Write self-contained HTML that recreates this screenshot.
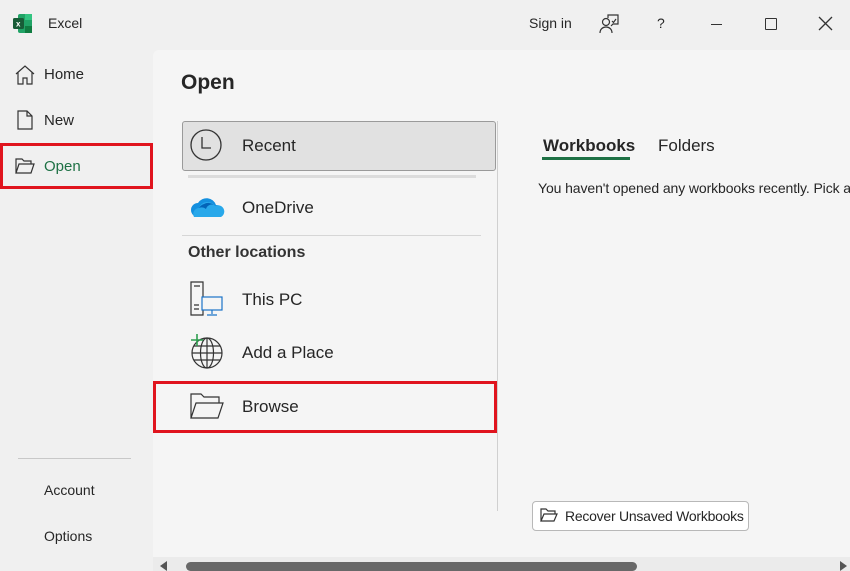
<!DOCTYPE html>
<html><head><style>
*{margin:0;padding:0;box-sizing:border-box}
body{width:850px;height:571px;overflow:hidden;background:#f0f0f0;font-family:"Segoe UI","Liberation Sans",sans-serif;color:#262626;position:relative}
.a{position:absolute}
.t{font-size:15px;white-space:nowrap}
svg{position:absolute;overflow:visible}
</style></head><body>
<svg style="left:13px;top:14px" width="20" height="20" viewBox="0 0 20 20">
<rect x="5" y="0" width="14" height="19" rx="2" fill="#21a366"/>
<rect x="12" y="0" width="7" height="6" fill="#33c481"/>
<rect x="12" y="12" width="7" height="7" fill="#107c41"/>
<rect x="0" y="4" width="11" height="11" rx="1.5" fill="#185c37"/>
<text x="3" y="12.5" font-size="8" font-weight="bold" fill="#fff" font-family="Liberation Sans">x</text>
</svg>
<div class="a t" style="left:48px;top:15px;font-size:14px">Excel</div>
<div class="a t" style="left:529px;top:15px;font-size:14px">Sign in</div>
<svg style="left:599px;top:14px" width="20" height="20" viewBox="0 0 20 20" fill="none" stroke="#333" stroke-width="1.2">
<circle cx="7" cy="8" r="3.5"/><path d="M1 19c0-4 3-6 6-6s6 2 6 6"/><path d="M9 4V1h10v9h-5l-2 2"/><path d="M13 7l1.5 1.5L17 5"/>
</svg>
<div class="a t" style="left:657px;top:15px;font-size:14px">?</div>
<div class="a" style="left:711px;top:24px;width:11px;height:1.3px;background:#333"></div>
<div class="a" style="left:765px;top:18px;width:12px;height:12px;border:1.3px solid #333;border-radius:1px"></div>
<svg style="left:819px;top:17px" width="13" height="13" viewBox="0 0 13 13" stroke="#333" stroke-width="1.3"><path d="M0 0L13 13M13 0L0 13"/></svg>

<svg style="left:15px;top:65px" width="20" height="20" viewBox="0 0 20 20" fill="none" stroke="#333" stroke-width="1.2"><path d="M1 9L10 1l9 8M3 7v12h5v-6h4v6h5V7"/></svg>
<div class="a t" style="left:44px;top:66px">Home</div>
<svg style="left:17px;top:110px" width="16" height="20" viewBox="0 0 16 20" fill="none" stroke="#333" stroke-width="1.2"><path d="M1 1h9l5 5v13H1zM10 1v5h5"/></svg>
<div class="a t" style="left:44px;top:112px">New</div>
<div class="a" style="left:0;top:143px;width:153px;height:46px;border:3px solid #e0141e"></div>
<svg style="left:15px;top:158px" width="20" height="16" viewBox="0 0 20 16" fill="none" stroke="#333" stroke-width="1.2"><path d="M1 15V1h6l2 2h7v3M1 15l3-9h15l-3 9z"/></svg>
<div class="a t" style="left:44px;top:158px;color:#1e7145">Open</div>
<div class="a" style="left:18px;top:458px;width:113px;height:1px;background:#c8c8c8"></div>
<div class="a t" style="left:44px;top:482px;font-size:14px">Account</div>
<div class="a t" style="left:44px;top:528px;font-size:14px">Options</div>

<div class="a" style="left:153px;top:50px;width:697px;height:521px;background:#f5f5f5;border-top-left-radius:6px"></div>
<div class="a" style="left:181px;top:71px;font-size:21px;font-weight:600;color:#262626">Open</div>

<div class="a" style="left:182px;top:121px;width:314px;height:50px;background:#e1e1e1;border:1px solid #9a9a9a;border-radius:3px"></div>
<svg style="left:190px;top:129px" width="32" height="32" viewBox="0 0 32 32" fill="none" stroke="#333" stroke-width="1.3"><circle cx="16" cy="16" r="15"/><path d="M12 8v11h9"/></svg>
<div class="a t" style="left:242px;top:136px;font-size:17px">Recent</div>
<div class="a" style="left:188px;top:175px;width:288px;height:3px;background:#dcdcdc"></div>

<svg style="left:190px;top:197px" width="34" height="22" viewBox="0 0 34 22">
<path d="M8 20a7 7 0 0 1 0-14 10 10 0 0 1 18 2 6 6 0 0 1 1 12z" fill="#1490df"/>
<path d="M4 20a6 6 0 0 1 5-9 9 9 0 0 1 16-2 5.5 5.5 0 0 1 6 11z" fill="#28a8ea"/>
<path d="M14 7a9 9 0 0 1 10 1 6 6 0 0 0-8 4 7 7 0 0 0-7-1 9 9 0 0 1 5-4z" fill="#0364b8"/>
</svg>
<div class="a t" style="left:242px;top:198px;font-size:17px">OneDrive</div>
<div class="a" style="left:182px;top:235px;width:299px;height:1px;background:#d6d6d6"></div>
<div class="a t" style="left:188px;top:244px;font-size:16px;font-weight:600;color:#333">Other locations</div>

<svg style="left:190px;top:281px" width="34" height="36" viewBox="0 0 34 36" fill="none" stroke-width="1.2">
<path d="M1 1h12v33H1z" stroke="#333"/><path d="M4 5h6M4 24h5M4 28h5" stroke="#333"/>
<rect x="12" y="16" width="20" height="13" fill="#f5f5f5" stroke="#1a73c8"/><path d="M22 29v4M17 34h10" stroke="#1a73c8"/>
</svg>
<div class="a t" style="left:242px;top:290px;font-size:17px">This PC</div>

<svg style="left:189px;top:334px" width="36" height="36" viewBox="0 0 36 36" fill="none" stroke="#333" stroke-width="1.2">
<circle cx="18" cy="19" r="15"/><ellipse cx="18" cy="19" rx="6.5" ry="15"/><path d="M3 19h30M5 12h26M5 26h26M18 4v30"/>
<path d="M2 6h12M8 0v12" stroke="#2e9e4f" stroke-width="1.6"/>
</svg>
<div class="a t" style="left:242px;top:343px;font-size:17px">Add a Place</div>

<div class="a" style="left:153px;top:381px;width:344px;height:52px;border:3px solid #e0141e"></div>
<svg style="left:190px;top:393px" width="34" height="26" viewBox="0 0 34 26" fill="none" stroke="#333" stroke-width="1.2"><path d="M1 25V1h10l3 3h15v6M1 25l5-15h27l-5 15z"/></svg>
<div class="a t" style="left:242px;top:397px;font-size:17px">Browse</div>

<div class="a" style="left:497px;top:121px;width:1px;height:390px;background:#d0d0d0"></div>

<div class="a t" style="left:543px;top:136px;font-size:17px;font-weight:600">Workbooks</div>
<div class="a" style="left:542px;top:157px;width:88px;height:3px;background:#1e7145"></div>
<div class="a t" style="left:658px;top:136px;font-size:17px">Folders</div>
<div class="a t" style="left:538px;top:180px;font-size:14px;letter-spacing:-0.1px">You haven't opened any workbooks recently. Pick a p</div>

<div class="a" style="left:532px;top:501px;width:217px;height:30px;background:#fff;border:1px solid #b8b8b8;border-radius:4px"></div>
<svg style="left:540px;top:508px" width="18" height="14" viewBox="0 0 18 14" fill="none" stroke="#333" stroke-width="1.2"><path d="M1 13V1h5l2 2h7v3M1 13l3-7h13l-3 7z"/></svg>
<div class="a t" style="left:565px;top:508px;font-size:14px;letter-spacing:-0.25px">Recover Unsaved Workbooks</div>

<div class="a" style="left:153px;top:557px;width:697px;height:14px;background:#ebebeb"></div>
<svg style="left:159px;top:561px" width="8" height="10" viewBox="0 0 8 10"><path d="M8 0L1 5l7 5z" fill="#555"/></svg>
<div class="a" style="left:186px;top:562px;width:451px;height:9px;background:#686868;border-radius:5px"></div>
<svg style="left:840px;top:561px" width="8" height="10" viewBox="0 0 8 10"><path d="M0 0l7 5-7 5z" fill="#555"/></svg>
</body></html>
